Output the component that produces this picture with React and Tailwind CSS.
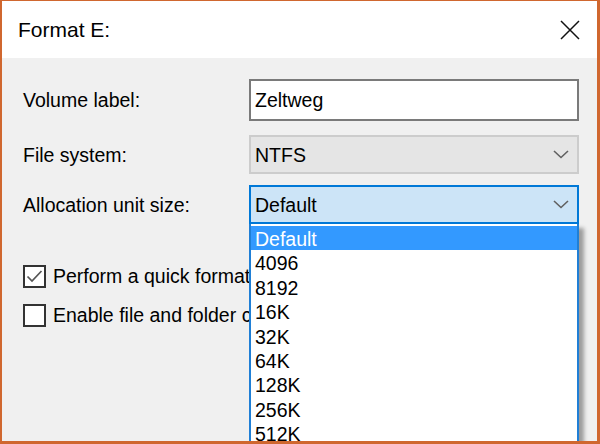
import React from 'react'

const sizes = ['Default', '4096', '8192', '16K', '32K', '64K', '128K', '256K', '512K', '1024K']

function Chevron() {
  return (
    <svg width="16" height="9" viewBox="0 0 16 9" className="shrink-0">
      <path d="M1 1 L8 7.5 L15 1" fill="none" stroke="#606060" strokeWidth="1.6" />
    </svg>
  )
}

function CheckBox({ checked, label }) {
  return (
    <div className="flex items-center gap-[7px]">
      <div className="w-[23px] h-[23px] border-2 border-[#333333] bg-white shrink-0 flex items-center justify-center">
        {checked && (
          <svg width="19" height="19" viewBox="0 0 19 19">
            <path d="M2.5 9.5 L7 14 L16.5 4" fill="none" stroke="#555555" strokeWidth="1.7" />
          </svg>
        )}
      </div>
      <span className="whitespace-nowrap text-black">{label}</span>
    </div>
  )
}

export default function App() {
  return (
    <div
      className="w-[600px] h-[444px] overflow-hidden bg-[#f0f0f0] border-l-2 border-t border-r-[3px] border-b-[3px] border-[#d0672f] text-[19.5px] leading-none"
      style={{ fontFamily: '"Liberation Sans", Arial, sans-serif' }}
    >
      {/* Title bar */}
      <div className="h-[57px] bg-white flex items-center justify-between pl-[16px] pr-[17px]">
        <span className="text-[21px] text-black">Format E:</span>
        <svg width="20" height="20" viewBox="0 0 20 20">
          <path d="M1 1 L19 19 M19 1 L1 19" stroke="#111111" strokeWidth="1.5" />
        </svg>
      </div>

      {/* Body */}
      <div className="pl-[21px] pt-[21px]">
        <div className="flex items-center">
          <span className="w-[226px] pt-[2px] text-black">Volume label:</span>
          <div className="w-[330px] h-[42px] border-2 border-[#7a7a7a] bg-white flex items-center pl-[4px] pt-[2px] text-black">
            Zeltweg
          </div>
        </div>

        <div className="flex items-center mt-[14px]">
          <span className="w-[226px] pt-[2px] text-black">File system:</span>
          <div className="w-[330px] h-[39px] border-2 border-[#cccccc] bg-[#e5e5e5] flex items-center justify-between pl-[4px] pr-[8px] text-black">
            <span className="pt-[2px]">NTFS</span>
            <Chevron />
          </div>
        </div>

        <div className="flex items-center mt-[11px]">
          <span className="w-[226px] pt-[2px] text-black">Allocation unit size:</span>
          <div className="relative w-[330px] h-[39px]">
            <div className="h-full border-2 border-[#0078d7] bg-[#cce4f7] flex items-center justify-between pl-[4px] pr-[8px] text-black">
              <span className="pt-[2px]">Default</span>
              <Chevron />
            </div>
            {/* Open list */}
            <div className="absolute left-0 top-full w-full z-10 bg-white border-2 border-t-0 border-[#1f7fd6] pt-[2px] shadow-[5px_4px_4px_rgba(0,0,0,0.35)]">
              {sizes.map((s, i) => (
                <div
                  key={s}
                  className={`h-[24.4px] flex items-center pl-[4px] pt-[3px] ${i === 0 ? 'bg-[#3399ff] text-white' : 'text-black'}`}
                >
                  {s}
                </div>
              ))}
            </div>
          </div>
        </div>

        <div className="mt-[41px] flex flex-col gap-[16px]">
          <CheckBox checked label="Perform a quick format" />
          <CheckBox label="Enable file and folder compression" />
        </div>
      </div>
    </div>
  )
}
